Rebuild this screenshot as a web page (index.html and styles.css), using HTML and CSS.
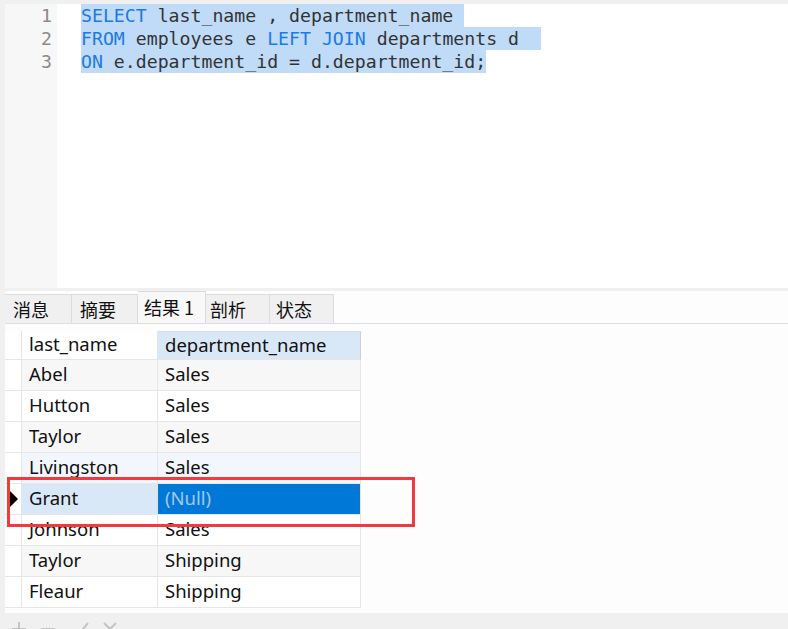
FILE: index.html
```html
<!DOCTYPE html>
<html>
<head>
<meta charset="utf-8">
<link rel="stylesheet" href="styles.css">
</head>
<body>
<div class="app">
  <div class="editor">
    <div class="gutter">
      <div class="ln">1</div>
      <div class="ln">2</div>
      <div class="ln">3</div>
    </div>
    <div class="code">
      <div class="line"><span class="sel"><span class="kw">SELECT</span> last_name , department_name </span></div>
      <div class="line"><span class="sel"><span class="kw">FROM</span> employees e <span class="kw">LEFT JOIN</span> departments d  </span></div>
      <div class="line"><span class="sel"><span class="kw">ON</span> e.department_id = d.department_id;</span></div>
    </div>
  </div>
  <div class="tabs">
    <div class="tab t1">消息</div>
    <div class="tab t2">摘要</div>
    <div class="tab t3 active">结果 1</div>
    <div class="tab t4">剖析</div>
    <div class="tab t5">状态</div>
  </div>
  <div class="results">
    <div class="grid">
      <div class="c rh hd"></div><div class="c hd">last_name</div><div class="c hd selcol">department_name</div>
      <div class="c rh"></div><div class="c odd">Abel</div><div class="c odd">Sales</div>
      <div class="c rh"></div><div class="c">Hutton</div><div class="c">Sales</div>
      <div class="c rh"></div><div class="c odd">Taylor</div><div class="c odd">Sales</div>
      <div class="c rh"></div><div class="c hov">Livingston</div><div class="c hov">Sales</div>
      <div class="c rh cur"><span class="arrow"></span></div><div class="c currow">Grant</div><div class="c curcell">(Null)</div>
      <div class="c rh"></div><div class="c">Johnson</div><div class="c">Sales</div>
      <div class="c rh"></div><div class="c odd">Taylor</div><div class="c odd">Shipping</div>
      <div class="c rh"></div><div class="c">Fleaur</div><div class="c">Shipping</div>
    </div>
    <div class="mark"></div>
  </div>
  <div class="toolbar">
    <svg class="ic" width="16" height="16" viewBox="0 0 16 16"><path d="M8 1v14M1 8h14" stroke="#c4c4c4" stroke-width="2" fill="none"/></svg>
    <svg class="ic" width="16" height="16" viewBox="0 0 16 16"><path d="M1 8h14" stroke="#c4c4c4" stroke-width="2" fill="none"/></svg>
    <svg class="ic" width="16" height="16" viewBox="0 0 16 16"><path d="M2 9l4 4 9-11" stroke="#c4c4c4" stroke-width="2" fill="none"/></svg>
    <svg class="ic" width="16" height="16" viewBox="0 0 16 16"><path d="M2 2l12 12M14 2L2 14" stroke="#c4c4c4" stroke-width="2" fill="none"/></svg>
  </div>
</div>
</body>
</html>
```
FILE: styles.css
```css
* { box-sizing: border-box; }
html, body { margin: 0; padding: 0; }
body {
  width: 788px;
  height: 629px;
  overflow: hidden;
  background: #f0f0f0;
  font-family: "Noto Sans", "Noto Sans CJK SC", sans-serif;
}
.app { display: flex; flex-direction: column; }

.editor {
  height: 288px;
  padding-top: 4px;
  padding-left: 5px;
  display: flex;
  background: #f0f0f0;
}
.gutter {
  width: 52px;
  background: #f7f7f7;
  padding-right: 5px;
  text-align: right;
}
.ln, .line {
  height: 23px;
  line-height: 23px;
  font-family: "DejaVu Sans Mono", monospace;
  font-size: 18.2px;
  white-space: pre;
}
.ln { color: #8a8a8a; }
.code {
  flex: 1;
  background: #fff;
  padding-left: 24px;
  color: #333;
}
.sel { display: inline-block; height: 23px; background: #bfdbf7; }
.kw { color: #1d79e6; }

.tabs {
  margin-top: 3px;
  margin-left: 5px;
  height: 33px;
  background: #fdfdfd;
  border-bottom: 1px solid #dedede;
  display: flex;
  align-items: flex-end;
  font-family: "Noto Sans CJK SC", sans-serif;
  font-size: 18px;
  color: #111;
}
.tab {
  height: 29px;
  line-height: 28px;
  padding-left: 8px;
  background: #f0f0f0;
  border: 1px solid #dcdcdc;
  border-bottom: none;
  border-left: none;
}
.t1 { width: 67px; border-left: none; }
.t2 { width: 66px; }
.t3 { width: 68px; padding-left: 6px; }
.t4 { width: 64px; padding-left: 4px; }
.t5 { width: 64px; padding-left: 6px; }
.tab.active {
  height: 32px;
  line-height: 30px;
  background: #f8f8f8;
  align-self: flex-end;
}

.results {
  position: relative;
  height: 289px;
  margin-left: 5px;
  background: #fdfdfd;
  padding-top: 7px;
}
.grid {
  display: grid;
  grid-template-columns: 17px 136px 203px;
  grid-auto-rows: 31px;
  grid-template-rows: 29px;
  font-size: 18.5px;
  color: #111;
}
.c {
  border-right: 1px solid #e6e6e6;
  border-bottom: 1px solid #e6e6e6;
  padding-left: 7px;
  padding-bottom: 3px;
  display: flex;
  align-items: center;
  white-space: nowrap;
  background: #fff;
}
.c.rh { padding-left: 0; padding-bottom: 0; background: #fff; }
.c.hd { background: #fff; }
.c.hd.selcol { background: #d9e8f7; border-top: 1px solid #cfdff0; border-right-color: #cfcfcf; }
.c.odd { background: #f7f7f7; }
.c.hov { background: #f2f7fd; }
.c.currow { background: #d9e8f7; }
.c.curcell { background: #0078d7; color: #a6c6ea; }
.arrow {
  width: 0; height: 0;
  margin-left: 5px;
  border-top: 8px solid transparent;
  border-bottom: 8px solid transparent;
  border-left: 8px solid #000;
}
.mark {
  position: absolute;
  left: 2px;
  top: 153px;
  width: 408px;
  height: 50px;
  border: 3px solid #ef3b3b;
}

.toolbar {
  height: 16px;
  display: flex;
  padding-left: 11px;
  padding-top: 8px;
  gap: 13px;
  overflow: visible;
}
.ic { flex: none; }
.ic:nth-child(3) { margin-left: 4px; }
```
